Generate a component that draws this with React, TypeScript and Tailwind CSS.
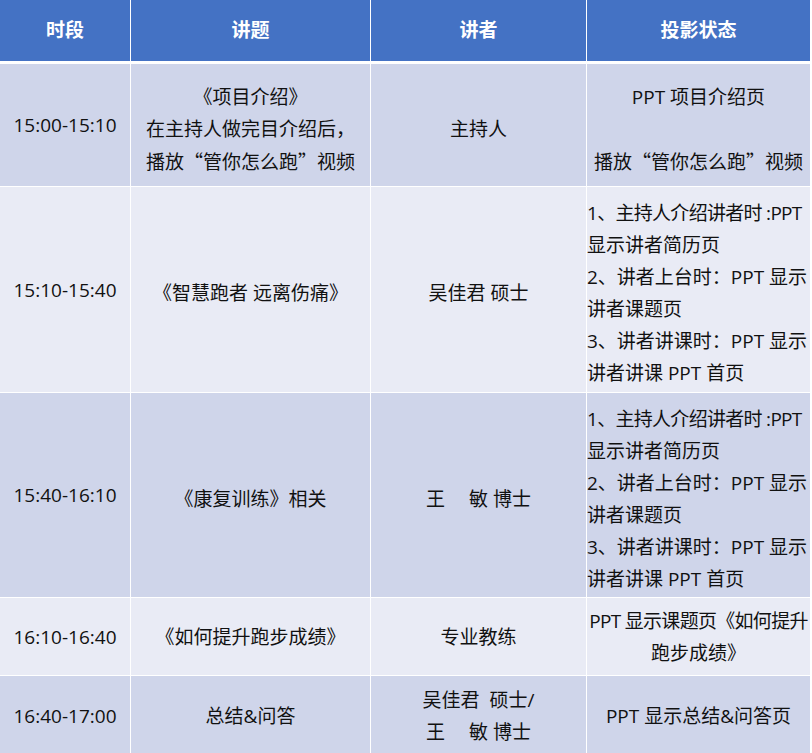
import React from "react";

const font = { fontFamily: '"Open Sans", "Noto Sans CJK SC", sans-serif' };

type Cell = { lines: string[]; align?: "center" | "left" };

const renderLine = (l: string) => {
  if (l === "") return "\u00a0";
  const parts = l.split(/([“”])/);
  return parts.map((p, i) =>
    p === "“" || p === "”" ? (
      <span key={i} className="font-['Noto_Sans_CJK_SC']">
        {p}
      </span>
    ) : (
      <React.Fragment key={i}>{p}</React.Fragment>
    )
  );
};

const Lines = ({ cell, shift }: { cell: Cell; shift: boolean }) => (
  <div
    className={
      "flex flex-col justify-center h-full overflow-hidden " +
      (shift ? "pt-[7px] " : "") +
      (cell.align === "left" ? "items-start" : "items-center")
    }
  >
    {cell.lines.map((l, i) => {
      const tight = l.startsWith("~");
      const text = tight ? l.slice(1) : l;
      return (
        <div
          key={i}
          className={
            "whitespace-pre leading-[32px] h-[32px]" + (tight ? " tracking-[-0.7px]" : "")
          }
        >
          {renderLine(text)}
        </div>
      );
    })}
  </div>
);

const talk = [
  "~1、主持人介绍讲者时 :PPT",
  "显示讲者简历页",
  "2、讲者上台时：PPT 显示",
  "讲者课题页",
  "3、讲者讲课时：PPT 显示",
  "讲者讲课 PPT 首页",
];

const rows: { h: string; bg: string; cells: Cell[] }[] = [
  {
    h: "h-[122px]",
    bg: "bg-[#cfd5ea]",
    cells: [
      { lines: ["15:00-15:10"] },
      { lines: ["《项目介绍》", "在主持人做完目介绍后，", "播放“管你怎么跑”视频"] },
      { lines: ["主持人"] },
      { lines: ["PPT 项目介绍页", "", "播放“管你怎么跑”视频"] },
    ],
  },
  {
    h: "h-[205px]",
    bg: "bg-[#e9ebf5]",
    cells: [
      { lines: ["15:10-15:40"] },
      { lines: ["《智慧跑者 远离伤痛》"] },
      { lines: ["吴佳君 硕士"] },
      { align: "left", lines: talk },
    ],
  },
  {
    h: "h-[204px]",
    bg: "bg-[#cfd5ea]",
    cells: [
      { lines: ["15:40-16:10"] },
      { lines: ["《康复训练》相关"] },
      { lines: ["王　 敏 博士"] },
      { align: "left", lines: talk },
    ],
  },
  {
    h: "h-[77px]",
    bg: "bg-[#e9ebf5]",
    cells: [
      { lines: ["16:10-16:40"] },
      { lines: ["《如何提升跑步成绩》"] },
      { lines: ["专业教练"] },
      { lines: ["~PPT 显示课题页《如何提升", "跑步成绩》"] },
    ],
  },
  {
    h: "h-[80px]",
    bg: "bg-[#cfd5ea]",
    cells: [
      { lines: ["16:40-17:00"] },
      { lines: ["总结&问答"] },
      { lines: ["吴佳君  硕士/", "王　 敏 博士"] },
      { lines: ["PPT 显示总结&问答页"] },
    ],
  },
];

const cols = "grid grid-cols-[130px_239px_215px_223px] gap-x-px";

export default function App() {
  return (
    <div className="w-[812px] h-[753px] overflow-hidden bg-white" style={font}>
      <div className="flex flex-col gap-px w-[810px]">
        <div className={cols + " h-[61px] mb-[2px]"}>
          {["时段", "讲题", "讲者", "投影状态"].map((t) => (
            <div
              key={t}
              className="bg-[#4472c4] text-white font-bold text-[19px] flex items-center justify-center"
            >
              {t}
            </div>
          ))}
        </div>
        {rows.map((r, i) => (
          <div key={i} className={cols + " " + r.h}>
            {r.cells.map((c, j) => (
              <div key={j} className={r.bg + " text-[#111111] text-[19px] overflow-hidden"}>
                <Lines cell={c} shift={j > 0 && i < 3} />
              </div>
            ))}
          </div>
        ))}
      </div>
    </div>
  );
}
